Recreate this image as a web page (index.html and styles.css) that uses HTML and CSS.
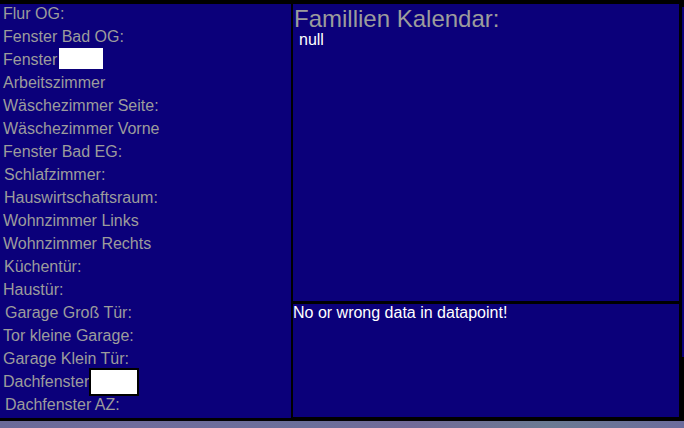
FILE: index.html
```html
<!DOCTYPE html>
<html lang="de">
<head>
<meta charset="utf-8">
<title>Vis</title>
<link rel="stylesheet" href="styles.css">
</head>
<body>
<div class="screen">
  <div class="panel list">
    <div class="row">Flur OG:</div>
    <div class="row">Fenster Bad OG:</div>
    <div class="row">Fenster<span class="blank"></span></div>
    <div class="row">Arbeitszimmer</div>
    <div class="row">Wäschezimmer Seite:</div>
    <div class="row">Wäschezimmer Vorne</div>
    <div class="row">Fenster Bad EG:</div>
    <div class="row in1">Schlafzimmer:</div>
    <div class="row in1">Hauswirtschaftsraum:</div>
    <div class="row">Wohnzimmer Links</div>
    <div class="row">Wohnzimmer Rechts</div>
    <div class="row in1">Küchentür:</div>
    <div class="row">Haustür:</div>
    <div class="row in2">Garage Groß Tür:</div>
    <div class="row">Tor kleine Garage:</div>
    <div class="row">Garage Klein Tür:</div>
    <div class="row">Dachfenster<span class="blank framed"></span></div>
    <div class="row in2">Dachfenster AZ:</div>
  </div>
  <div class="column">
    <div class="panel calendar">
      <div class="title">Famillien Kalendar:</div>
      <div class="value">null</div>
    </div>
    <div class="panel data">No or wrong data in datapoint!</div>
  </div>
  <div class="sliver"></div>
</div>
</body>
</html>
```

FILE: styles.css
```css
html, body {
  margin: 0;
  padding: 0;
}
body {
  width: 684px;
  height: 428px;
  overflow: hidden;
  background: linear-gradient(90deg, #6a6a98 0%, #6f6c9c 20%, #6b6f9a 45%, #726a98 60%, #6a7a92 80%, #6c6c9c 100%);
  font-family: "Liberation Sans", Arial, sans-serif;
}
.screen {
  display: flex;
  align-items: flex-start;
  height: 421px;
  box-sizing: border-box;
  padding-top: 4px;
  background: #000;
}
.panel {
  background: #0b007a;
  box-sizing: border-box;
}
.list {
  width: 291px;
  height: 414px;
  margin-right: 2px;
  padding-top: 1px;
}
.row {
  height: 23px;
  line-height: 18px;
  font-size: 16px;
  color: #9c9c9c;
  padding-left: 3px;
  white-space: nowrap;
}
.row.in1 { padding-left: 4px; }
.row.in2 { padding-left: 5px; }
.blank {
  display: inline-block;
  vertical-align: top;
  width: 44px;
  height: 21px;
  margin-top: -3px;
  margin-left: 2px;
  background: #fff;
}
.blank.framed {
  width: 46px;
  height: 24px;
  margin-top: -5px;
  margin-left: 0;
  border: 2px solid #000;
}
.column {
  display: flex;
  flex-direction: column;
  gap: 3px;
  width: 386px;
}
.calendar {
  height: 297px;
  padding-top: 2px;
}
.title {
  font-size: 24px;
  line-height: 25px;
  color: #9c9c9c;
  padding-left: 1px;
}
.value {
  font-size: 16px;
  line-height: normal;
  color: #fff;
  padding-left: 6px;
}
.data {
  height: 113px;
  font-size: 16px;
  line-height: normal;
  color: #fff;
}
.sliver {
  width: 2px;
  height: 350px;
  margin-left: 3px;
  margin-top: 3px;
  background: #0b007a;
}
```
